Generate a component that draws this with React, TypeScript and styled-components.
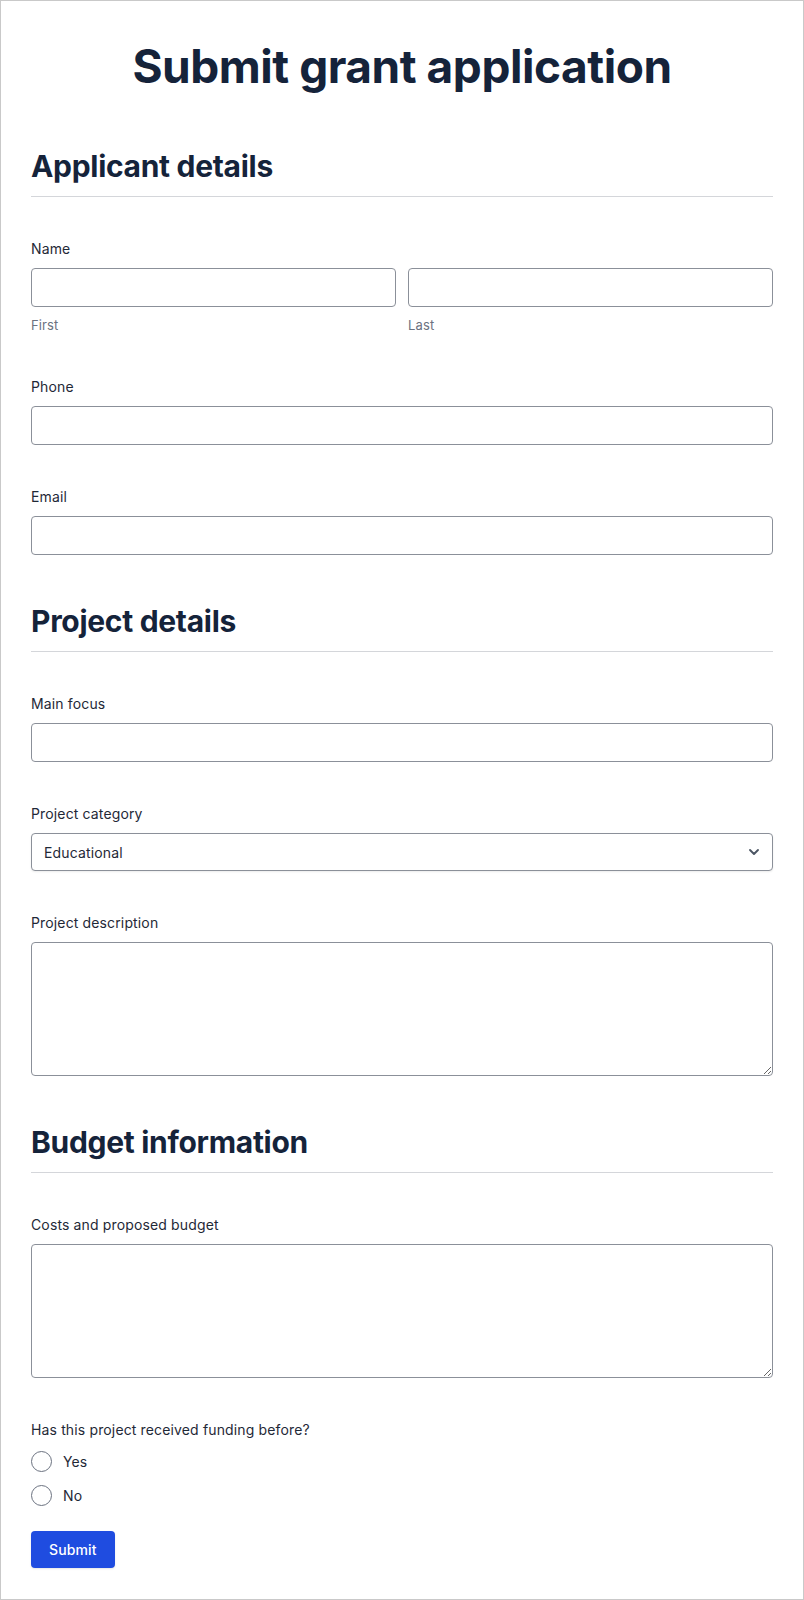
import React from "react";
import styled, { createGlobalStyle } from "styled-components";

const GlobalStyle = createGlobalStyle`
  * {
    box-sizing: border-box;
  }
  body {
    margin: 0;
    background: #ffffff;
    font-family: Inter, "Noto Sans", "Liberation Sans", sans-serif;
    color: #1f2937;
  }
`;

const App = () => {
  return (
    <>
      <GlobalStyle />
      <Page>
        <Title>Submit grant application</Title>

        <Section>
          <SectionHeading>Applicant details</SectionHeading>
          <Field>
            <Label>Name</Label>
            <NameRow>
              <div>
                <Input type="text" />
                <Hint>First</Hint>
              </div>
              <div>
                <Input type="text" />
                <Hint>Last</Hint>
              </div>
            </NameRow>
          </Field>
          <Field>
            <Label>Phone</Label>
            <Input type="tel" />
          </Field>
          <Field>
            <Label>Email</Label>
            <Input type="email" />
          </Field>
        </Section>

        <Section>
          <SectionHeading>Project details</SectionHeading>
          <Field>
            <Label>Main focus</Label>
            <Input type="text" />
          </Field>
          <Field>
            <Label>Project category</Label>
            <SelectWrap>
              <Select defaultValue="Educational">
                <option>Educational</option>
                <option>Community</option>
                <option>Research</option>
              </Select>
              <Chevron viewBox="0 0 24 24">
                <path d="M6 9l6 6 6-6" />
              </Chevron>
            </SelectWrap>
          </Field>
          <Field>
            <Label>Project description</Label>
            <TextArea />
          </Field>
        </Section>

        <Section>
          <SectionHeading>Budget information</SectionHeading>
          <Field>
            <Label>Costs and proposed budget</Label>
            <TextArea />
          </Field>
          <Field>
            <Label>Has this project received funding before?</Label>
            <RadioGroup>
              <RadioRow>
                <Radio type="radio" name="funded" />
                Yes
              </RadioRow>
              <RadioRow>
                <Radio type="radio" name="funded" />
                No
              </RadioRow>
            </RadioGroup>
          </Field>
        </Section>

        <SubmitButton type="button">Submit</SubmitButton>
      </Page>
    </>
  );
};

const Page = styled.div`
  width: 804px;
  min-height: 1600px;
  border: 1px solid #c9c9c9;
  padding: 37px 30px 29px 30px;
  background: #ffffff;
`;

const Title = styled.h1`
  margin: 0;
  text-align: center;
  font-size: 46px;
  line-height: 56px;
  font-weight: 700;
  letter-spacing: -0.01em;
  color: #15233a;
`;

const Section = styled.section`
  margin-top: 48px;
  &:first-of-type {
    margin-top: 54px;
  }
`;

const SectionHeading = styled.h2`
  margin: 0;
  padding-bottom: 12px;
  border-bottom: 1px solid #d4d6da;
  font-size: 30px;
  line-height: 36px;
  font-weight: 700;
  letter-spacing: -0.01em;
  color: #15233a;
`;

const Field = styled.div`
  margin-top: 42px;
`;

const Label = styled.label`
  display: block;
  margin-bottom: 9px;
  font-size: 14px;
  line-height: 20px;
  letter-spacing: 0.01em;
  color: #1f2937;
`;

const NameRow = styled.div`
  display: grid;
  grid-template-columns: 1fr 1fr;
  gap: 12px;
`;

const Hint = styled.div`
  margin-top: 8px;
  font-size: 13px;
  line-height: 20px;
  letter-spacing: 0.01em;
  color: #6b7280;
`;

const Input = styled.input`
  display: block;
  width: 100%;
  height: 39px;
  padding: 0 12px;
  border: 1px solid #8b9099;
  border-radius: 4px;
  background: #ffffff;
  font-family: inherit;
  font-size: 14px;
  color: #1f2937;
`;

const SelectWrap = styled.div`
  position: relative;
`;

const Select = styled.select`
  display: block;
  width: 100%;
  height: 38px;
  padding: 0 36px 0 12px;
  border: 1px solid #8b9099;
  border-radius: 4px;
  background: #ffffff;
  box-shadow: 0 1px 2px rgba(0, 0, 0, 0.08);
  appearance: none;
  font-family: inherit;
  font-size: 14px;
  letter-spacing: 0.01em;
  color: #1f2937;
`;

const Chevron = styled.svg`
  position: absolute;
  right: 11px;
  top: 50%;
  width: 16px;
  height: 16px;
  margin-top: -8px;
  fill: none;
  stroke: #4b5563;
  stroke-width: 2.8;
  stroke-linecap: round;
  stroke-linejoin: round;
  pointer-events: none;
`;

const TextArea = styled.textarea`
  display: block;
  width: 100%;
  height: 134px;
  padding: 8px 12px;
  border: 1px solid #8b9099;
  border-radius: 4px;
  background: #ffffff;
  font-family: inherit;
  font-size: 14px;
  color: #1f2937;
`;

const RadioGroup = styled.div`
  display: flex;
  flex-direction: column;
  gap: 13px;
  margin-top: 11px;
`;

const RadioRow = styled.label`
  display: flex;
  align-items: center;
  gap: 11px;
  font-size: 14px;
  line-height: 20px;
  letter-spacing: 0.01em;
  color: #1f2937;
`;

const Radio = styled.input`
  appearance: none;
  width: 21px;
  height: 21px;
  margin: 0;
  border: 1px solid #6b7280;
  border-radius: 50%;
  background: #ffffff;
`;

const SubmitButton = styled.button`
  display: block;
  margin-top: 25px;
  height: 37px;
  padding: 0 18px;
  border: none;
  border-radius: 4px;
  background: #1f4ce0;
  box-shadow: 0 1px 2px rgba(0, 0, 0, 0.1);
  font-family: inherit;
  font-size: 14px;
  font-weight: 500;
  letter-spacing: 0.01em;
  color: #ffffff;
`;

export default App;
